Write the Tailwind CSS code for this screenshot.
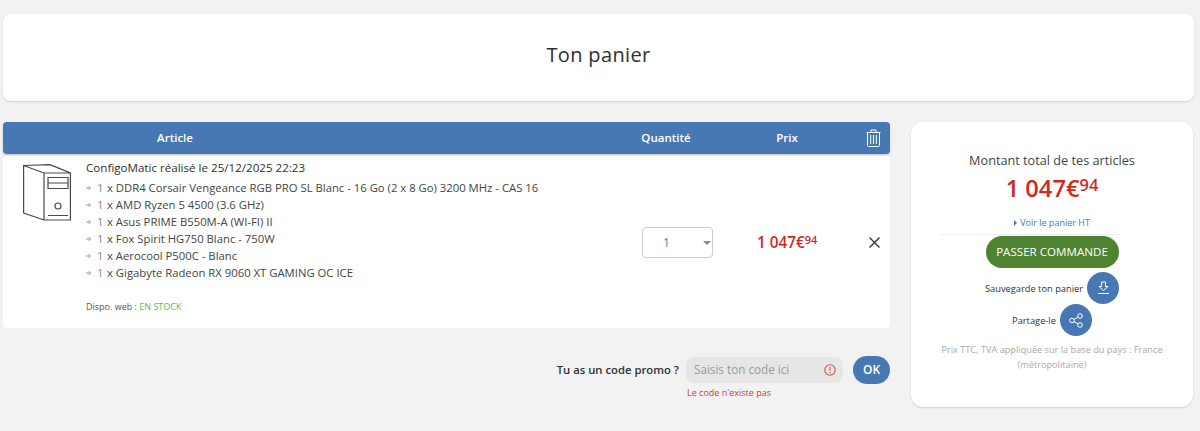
<!doctype html>
<html lang="fr">
<head>
    <meta charset="UTF-8">
    <title>Ton panier</title>
    <script src="https://cdn.jsdelivr.net/npm/@tailwindcss/browser@4"></script>
</head>
<body class="bg-[#f2f2f2] font-['Open_Sans',sans-serif] text-[#333] overflow-hidden">
<div class="h-[431px] pl-[3px] pr-[6px] pt-[14px]">

    <!-- title -->
    <div class="h-[87px] bg-white rounded-lg shadow-[0_1px_2px_rgba(0,0,0,0.15)] flex items-center justify-center pb-[6px]">
        <h1 class="text-[20px] font-medium tracking-[0.35px] text-[#2f2f2f]">Ton panier</h1>
    </div>

    <div class="flex gap-[21px] mt-[21px] items-start">
        <!-- left column -->
        <div class="w-[887px]">
            <div class="h-[32px] bg-[#4878b3] rounded shadow-[0_1px_2px_rgba(0,0,0,0.2)] flex items-center text-white text-[11.500px] font-semibold">
                <div class="w-[344px] text-center">Article</div>
                <div class="ml-[273px] w-[92px] text-center">Quantité</div>
                <div class="ml-[29px] w-[92px] text-center">Prix</div>
                <svg class="ml-[33px]" width="15" height="18" viewBox="0 0 15 18" fill="none" stroke="white" stroke-width="1">
                    <path d="M.5 3.500h14M5 3.500V1h5v2.500M1.500 3.500v12.800a1.200 1.200 0 0 0 1.200 1.200h9.600a1.200 1.200 0 0 0 1.200-1.200V3.500M4.700 6v9M7.500 6v9M10.300 6v9"/>
                </svg>
            </div>

            <div class="h-[172px] mt-[2px] bg-white rounded flex relative">
                <div class="w-[83px] pl-[20px] pt-[8px] shrink-0">
                    <svg width="48" height="57" viewBox="0 0 48 57" fill="none" stroke="#4a4a4a" stroke-width="1.200">
                        <path d="M.6 1.500 27 .6 47.400 9v47H21L.6 49zM21 56V9h26.400M.6 1.500 21 9"/>
                        <path d="M25 13.500h20v11H25zM25 19h20M25 51.500h20"/>
                        <circle cx="35" cy="42" r="3"/>
                    </svg>
                </div>
                <div class="pt-[3px] flex-1 text-[#333]">
                    <p class="text-[11.600px] leading-[17px] text-[#2f2f2f]">ConfigoMatic réalisé le 25/12/2025 22:23</p>
                    <ul class="mt-[3px] text-[11.300px] leading-[17px] text-[#444]">
                        <li class="flex items-center"><svg class="mr-[6px]" width="5" height="6" viewBox="0 0 5 6" fill="none" stroke="#7fa6d3" stroke-width="1"><path d="M0 3h4.500M2.500 1l2 2-2 2"/></svg><span class="w-[10px] text-[#888]">1</span><span>x DDR4 Corsair Vengeance RGB PRO SL Blanc - 16 Go (2 x 8 Go) 3200 MHz - CAS 16</span></li>
                        <li class="flex items-center"><svg class="mr-[6px]" width="5" height="6" viewBox="0 0 5 6" fill="none" stroke="#7fa6d3" stroke-width="1"><path d="M0 3h4.500M2.500 1l2 2-2 2"/></svg><span class="w-[10px] text-[#888]">1</span><span>x AMD Ryzen 5 4500 (3.6 GHz)</span></li>
                        <li class="flex items-center"><svg class="mr-[6px]" width="5" height="6" viewBox="0 0 5 6" fill="none" stroke="#7fa6d3" stroke-width="1"><path d="M0 3h4.500M2.500 1l2 2-2 2"/></svg><span class="w-[10px] text-[#888]">1</span><span>x Asus PRIME B550M-A (WI-FI) II</span></li>
                        <li class="flex items-center"><svg class="mr-[6px]" width="5" height="6" viewBox="0 0 5 6" fill="none" stroke="#7fa6d3" stroke-width="1"><path d="M0 3h4.500M2.500 1l2 2-2 2"/></svg><span class="w-[10px] text-[#888]">1</span><span>x Fox Spirit HG750 Blanc - 750W</span></li>
                        <li class="flex items-center"><svg class="mr-[6px]" width="5" height="6" viewBox="0 0 5 6" fill="none" stroke="#7fa6d3" stroke-width="1"><path d="M0 3h4.500M2.500 1l2 2-2 2"/></svg><span class="w-[10px] text-[#888]">1</span><span>x Aerocool P500C - Blanc</span></li>
                        <li class="flex items-center"><svg class="mr-[6px]" width="5" height="6" viewBox="0 0 5 6" fill="none" stroke="#7fa6d3" stroke-width="1"><path d="M0 3h4.500M2.500 1l2 2-2 2"/></svg><span class="w-[10px] text-[#888]">1</span><span>x Gigabyte Radeon RX 9060 XT GAMING OC ICE</span></li>
                    </ul>
                    <p class="mt-[20px] text-[9px] leading-[12px] text-[#555]">Dispo. web : <span class="text-[#5cb85c]">EN STOCK</span></p>
                </div>
                <!-- quantity -->
                <div class="absolute left-[639px] top-[71px] w-[71px] h-[31px] border border-[#ccc] rounded flex items-center text-[12px] text-[#777]">
                    <span class="w-[47px] text-center">1</span>
                    <span class="ml-[13px] w-0 h-0 border-x-[4px] border-x-transparent border-t-[4px] border-t-[#888]"></span>
                </div>
                <!-- price -->
                <div class="absolute left-[754px] top-[76px] flex items-start font-semibold text-[#d2281c]">
                    <span class="text-[15.300px] leading-[21px]">1 047€</span><span class="text-[11px] leading-[14px] mt-[1px]">94</span>
                </div>
                <svg class="absolute left-[866px] top-[81px]" width="11" height="11" viewBox="0 0 11 11" stroke="#333" stroke-width="1.400">
                    <path d="M.5.5l10 10M10.500.5l-10 10"/>
                </svg>
            </div>

            <!-- promo -->
            <div class="flex justify-end items-center mt-[28px]">
                <span class="text-[11.300px] font-semibold text-[#333]">Tu as un code promo ?</span>
                <div class="ml-[7px] w-[157px] h-[26px] bg-[#e6e6e6] rounded-lg flex items-center justify-between pl-[8px] pr-[7px] text-[11.700px] text-[#999]">
                    <span>Saisis ton code ici</span>
                    <svg width="12" height="12" viewBox="0 0 12 12" fill="none" stroke="#d9534f" stroke-width="1.100">
                        <circle cx="6" cy="6" r="5.200"/>
                        <path d="M6 2.800v4M6 8v1.200"/>
                    </svg>
                </div>
                <button class="ml-[10px] w-[37px] h-[28px] rounded-full bg-[#4878b3] text-white text-[12px] font-semibold">OK</button>
            </div>
            <p class="ml-[684px] mt-[3px] text-[9px] leading-[12px] text-[#c9403a]">Le code n'existe pas</p>
        </div>

        <!-- summary -->
        <aside class="w-[282px] h-[285px] bg-white rounded-xl shadow-[0_1px_2px_rgba(0,0,0,0.15)] flex flex-col items-center pt-[29px]">
            <p class="text-[12.700px] leading-[18px] text-[#444]">Montant total de tes articles</p>
            <p class="mt-[4px] flex items-start font-semibold text-[#d2281c]">
                <span class="text-[23.700px] leading-[30px]">1 047€</span><span class="text-[16.500px] leading-[22px] mt-[1px]">94</span>
            </p>
            <a class="mt-[14px] text-[9px] leading-[12px] text-[#4878b3] flex items-center gap-[3px]"><span class="w-0 h-0 border-y-[3px] border-y-transparent border-l-[3px] border-l-[#4878b3]"></span>Voir le panier HT</a>
            <div class="w-[180px] h-px bg-[#f0f0f0] mt-[5px] mr-[44px]"></div>
            <button class="w-[133px] h-[32px] mt-px rounded-full bg-[#4f8231] text-white text-[11.600px] font-medium">PASSER COMMANDE</button>
            <div class="flex items-center gap-[4px] mt-[4px]">
                <span class="text-[9.300px] font-medium text-[#333] pt-[2px]">Sauvegarde ton panier</span>
                <span class="w-[32px] h-[32px] rounded-full bg-[#4878b3] flex items-center justify-center">
                    <svg width="13" height="14" viewBox="0 0 13 14" fill="none" stroke="white" stroke-width="1">
                        <path d="M4.500 1h4v4.500h2.500L6.500 9.500 2 5.500h2.500zM1 12.500h11"/>
                    </svg>
                </span>
            </div>
            <div class="flex items-center gap-[4px]">
                <span class="text-[9.300px] font-medium text-[#333] pt-[2px]">Partage-le</span>
                <span class="w-[32px] h-[32px] rounded-full bg-[#4878b3] flex items-center justify-center">
                    <svg width="14" height="15" viewBox="0 0 14 15" fill="none" stroke="white" stroke-width="1">
                        <circle cx="3" cy="7.500" r="2.300"/><circle cx="11" cy="3" r="2.300"/><circle cx="11" cy="12" r="2.300"/>
                        <path d="M5 6.400l4-2.300M5 8.600l4 2.300"/>
                    </svg>
                </span>
            </div>
            <p class="mt-[6px] w-[240px] text-center text-[9.200px] leading-[15px] text-[#aaa]">Prix TTC, TVA appliquée sur la base du pays : France (métropolitaine)</p>
        </aside>
    </div>
</div>
</body>
</html>
